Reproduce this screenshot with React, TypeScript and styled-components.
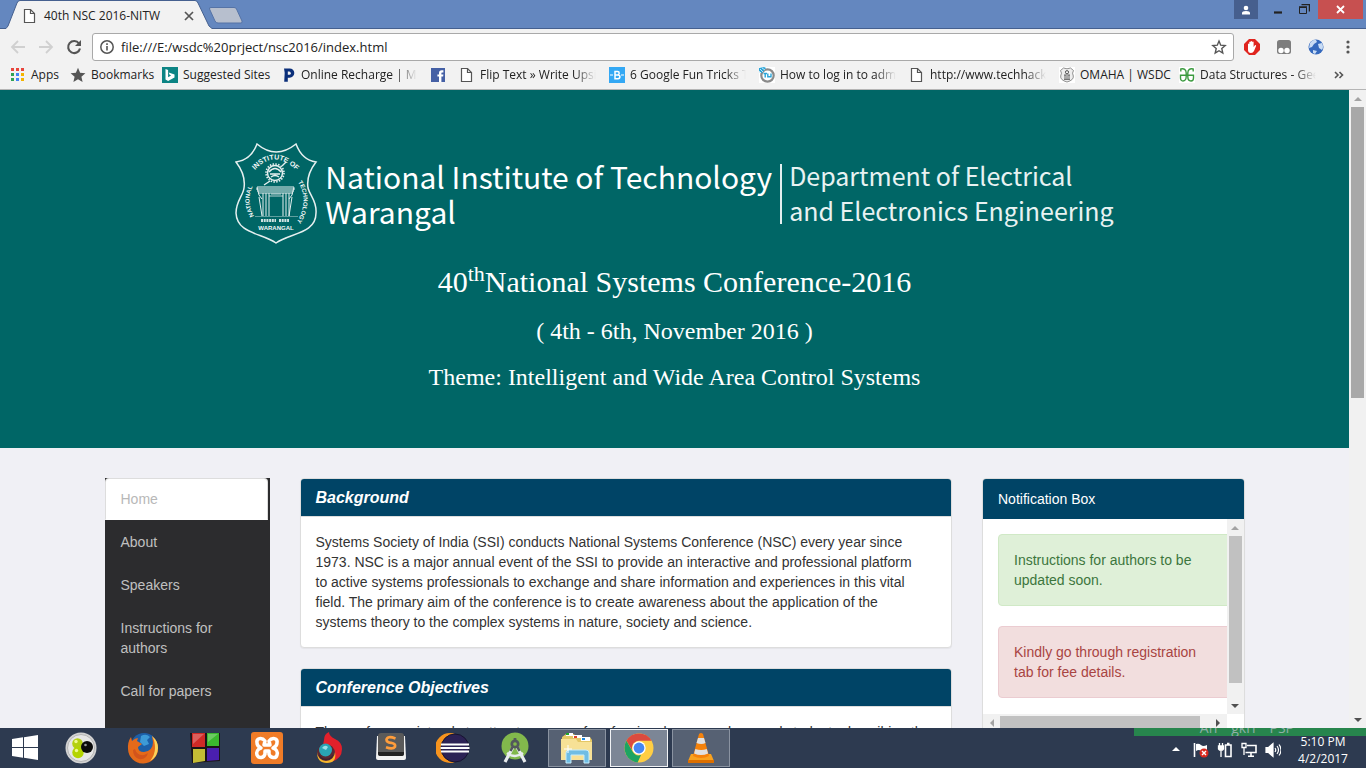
import React from "react";
import styled, { createGlobalStyle } from "styled-components";

const GlobalStyle = createGlobalStyle`
  *, *::before, *::after { box-sizing: border-box; }
  body { margin: 0; font-family: "Liberation Sans", Arial, sans-serif; font-size: 14px; line-height: 20px; color: #333; }
  button { border: 0; padding: 0; background: none; font: inherit; color: inherit; }
  h1, h2, h3, p, ul { margin: 0; padding: 0; }
  svg { display: block; flex: none; }
`;

const uiFont = `"Open Sans", "Segoe UI", sans-serif`;

const Desktop = styled.div`
  display: flex;
  flex-direction: column;
  height: 100vh;
  overflow: hidden;
`;

/* ---------- browser frame ---------- */

const TabStrip = styled.div`
  display: flex;
  justify-content: space-between;
  flex: none;
  height: 29px;
  background: #6487bf;
  border-bottom: 1px solid #45608f;
  font-family: ${uiFont};
`;

const TabGroup = styled.div`
  display: flex;
  padding-left: 6px;
`;

const Tab = styled.div`
  position: relative;
  display: flex;
  align-items: center;
  width: 206px;
  height: 29px;
  padding: 2px 14px 0 16px;
  font-size: 12px;
  line-height: 16px;
  color: #222;
`;

const TabShape = styled.svg`
  position: absolute;
  left: 0;
  top: 0;
`;

const TabIcon = styled.span`
  position: relative;
  width: 22px;
`;

const TabTitle = styled.span`
  position: relative;
  flex: 1;
  white-space: nowrap;
`;

const TabClose = styled.button`
  position: relative;
  width: 14px;
`;

const NewTab = styled.button`
  display: block;
  height: 24px;
  padding-top: 7px;
  margin-left: -4px;
`;

const WindowControls = styled.div`
  display: flex;
  height: 19px;
  padding-right: 3px;
`;

const WindowButton = styled.button<{ $width: number; $bg?: string }>`
  display: flex;
  align-items: center;
  justify-content: center;
  width: ${(p) => p.$width}px;
  background: ${(p) => p.$bg ?? "transparent"};
`;

const Toolbar = styled.div`
  display: flex;
  align-items: center;
  flex: none;
  height: 36px;
  padding: 0 8px 0 10px;
  background: #f2f2f2;
`;

const NavButton = styled.button`
  width: 28px;
`;

const AddressBar = styled.label`
  display: flex;
  align-items: center;
  flex: 1;
  gap: 6px;
  height: 28px;
  margin-right: 10px;
  padding: 0 6px;
  margin-left: -2px;
  background: #fff;
  border: 1px solid #a9a9a9;
  border-radius: 3px;
`;

const AddressInput = styled.input`
  flex: 1;
  min-width: 0;
  border: 0;
  padding: 0;
  outline: 0;
  background: transparent;
  font-family: ${uiFont};
  font-size: 13px;
  line-height: 20px;
  color: #222;
`;

const ExtensionButton = styled.button`
  display: flex;
  justify-content: center;
  width: 16px;
  margin-right: 16px;
  &:last-child { margin-right: 2px; }
`;

const BookmarkBar = styled.nav`
  display: flex;
  align-items: center;
  flex: none;
  gap: 13px;
  height: 25px;
  padding: 0 21px 4px 10px;
  background: #f2f2f2;
  border-bottom: 1px solid #b5b5b5;
  font-family: ${uiFont};
  font-size: 12px;
  line-height: 16px;
  overflow: hidden;
`;

const Bookmark = styled.a`
  display: flex;
  align-items: center;
  flex: none;
  gap: 5px;
  color: #222;
  text-decoration: none;
`;

const BookmarkLabel = styled.span<{ $width: number; $fade?: boolean }>`
  width: ${(p) => p.$width}px;
  white-space: nowrap;
  ${(p) =>
    p.$fade &&
    `overflow: hidden;
     -webkit-mask-image: linear-gradient(to right, #000 82%, transparent);
     mask-image: linear-gradient(to right, #000 82%, transparent);`}
`;

const MoreButton = styled.button`
  margin-left: auto;
`;

/* ---------- page ---------- */

const Viewport = styled.div`
  display: flex;
  flex: 1;
  min-height: 0;
  background: #f0f0f5;
`;

const Page = styled.main`
  flex: 1;
  min-width: 0;
  overflow: hidden;
`;

const Banner = styled.header`
  display: flex;
  flex-direction: column;
  align-items: center;
  height: 358px;
  padding-top: 53px;
  background: #006666;
  color: #fff;
  text-align: center;
`;

const Brand = styled.div`
  display: flex;
  align-items: center;
  height: 102px;
  font-family: "Noto Sans CJK SC", sans-serif;
  text-align: left;
  white-space: nowrap;
`;

const Institute = styled.div`
  margin-left: 7px;
  font-size: 30px;
  line-height: 35px;
`;

const Department = styled.div`
  display: flex;
  flex-direction: column;
  height: 60px;
  margin-left: 8px;
  padding-left: 7px;
  border-left: 2px solid #e4efef;
  color: #e8f2f2;
  font-size: 25px;
  line-height: 35px;
  span:first-child { margin-top: -6px; }
`;

const Conference = styled.h1`
  margin: 19px 0 -2px;
  font: 30px/36px "Liberation Serif", "Times New Roman", serif;
  sup { font-size: 22px; line-height: 0; }
`;

const ConferenceDetail = styled.h2`
  margin-top: 20px;
  font: 24px/26px "Liberation Serif", "Times New Roman", serif;
`;

const Columns = styled.div`
  display: grid;
  grid-template-columns: repeat(12, minmax(0, 1fr));
  align-items: start;
  column-gap: 30px;
  max-width: 1140px;
  margin: 30px auto 0;
`;

const SideNav = styled.nav`
  grid-column: span 2;
  display: flex;
  flex-direction: column;
  gap: 1px;
  min-height: 430px;
  padding-right: 2px;
  background: #2c2c2e;
`;

const SideLink = styled.a<{ $active?: boolean }>`
  padding: 10px 15px;
  border: 1px solid ${(p) => (p.$active ? "#ddd" : "transparent")};
  border-bottom: 1px solid transparent;
  border-radius: 4px 4px 0 0;
  background: ${(p) => (p.$active ? "#fff" : "transparent")};
  color: ${(p) => (p.$active ? "#b8b8b8" : "#c0c0c0")};
  text-decoration: none;
`;

const Articles = styled.div`
  grid-column: span 7;
`;

const Panel = styled.section`
  margin-bottom: 20px;
  border: 1px solid #ddd;
  border-radius: 4px;
  background: #fff;
  box-shadow: 0 1px 1px rgba(0, 0, 0, 0.05);
  overflow: hidden;
`;

const PanelTitle = styled.h3`
  padding: 10px 15px;
  border-bottom: 1px solid #ddd;
  background: #004466;
  color: #fff;
  font-size: 16px;
  font-style: italic;
  line-height: 17px;
`;

const PanelText = styled.p`
  padding: 15px;
`;

const Aside = styled.aside`
  grid-column: span 3;
`;

const NoticeTitle = styled.h3`
  padding: 10px 15px;
  background: #004466;
  color: #fff;
  font-size: 14px;
  font-weight: 400;
  line-height: 20px;
`;

const NoticeFrame = styled.div`
  display: grid;
  grid-template-columns: minmax(0, 1fr) 17px;
  grid-template-rows: 195px 17px;
`;

const NoticeList = styled.div`
  display: flex;
  flex-direction: column;
  gap: 20px;
  padding: 15px 0 0 15px;
  overflow: hidden;
`;

const Notice = styled.div<{ $tone: "success" | "danger" }>`
  width: 245px;
  padding: 15px 35px 15px 15px;
  border: 1px solid ${(p) => (p.$tone === "success" ? "#d0e9c6" : "#ebccd1")};
  border-radius: 4px;
  background: ${(p) => (p.$tone === "success" ? "#dff0d8" : "#f2dede")};
  color: ${(p) => (p.$tone === "success" ? "#3c763d" : "#a94442")};
`;

const ScrollTrack = styled.div<{ $horizontal?: boolean }>`
  display: flex;
  flex-direction: ${(p) => (p.$horizontal ? "row" : "column")};
  align-items: center;
  flex: none;
  min-width: 17px;
  background: #f1f1f1;
`;

const ScrollArrow = styled.span<{ $end?: boolean }>`
  display: flex;
  align-items: center;
  justify-content: center;
  width: 17px;
  height: 17px;
  ${(p) => p.$end && "margin-top: auto;"}
`;

const ScrollThumb = styled.span<{ $length: number; $horizontal?: boolean; $dark?: boolean }>`
  width: ${(p) => (p.$horizontal ? p.$length : 13)}px;
  height: ${(p) => (p.$horizontal ? 13 : p.$length)}px;
  margin-right: ${(p) => (p.$horizontal ? "auto" : 0)};
  background: ${(p) => (p.$dark ? "#a8a8a8" : "#c1c1c1")};
`;

/* ---------- taskbar ---------- */

const Taskbar = styled.footer`
  position: relative;
  display: flex;
  flex: none;
  height: 40px;
  background: #2d3a50;
  color: #fff;
  font-family: ${uiFont};
`;

const StartButton = styled.button`
  display: flex;
  align-items: center;
  justify-content: center;
  width: 50px;
  margin-right: 2px;
`;

const AppList = styled.div`
  display: flex;
  gap: 4px;
  padding: 1px 0;
`;

const AppButton = styled.button<{ $state?: "open" | "active" }>`
  display: flex;
  align-items: center;
  justify-content: center;
  width: 58px;
  border: 1px solid
    ${(p) => (p.$state === "active" ? "#f0f2f5" : p.$state === "open" ? "#8a93a1" : "transparent")};
  background: ${(p) => (p.$state === "active" ? "#7c8696" : p.$state === "open" ? "#566173" : "transparent")};
`;

const Tray = styled.div`
  display: flex;
  align-items: center;
  gap: 8px;
  margin-left: auto;
  padding: 4px 15px 0 0;
  svg:first-child { margin-right: 4px; }
`;

const Clock = styled.time`
  width: 56px;
  margin-left: 6px;
  font-size: 12px;
  line-height: 17px;
  text-align: center;
  white-space: nowrap;
`;

const GreenStrip = styled.div`
  position: absolute;
  top: 0;
  right: 0;
  display: flex;
  align-items: flex-end;
  justify-content: flex-end;
  gap: 14px;
  width: 232px;
  height: 8px;
  padding-right: 72px;
  background: #27854d;
  color: #8fb0a8;
  font-size: 14px;
  line-height: 16px;
  overflow: hidden;
`;

/* ---------- small drawings ---------- */

const DocIcon = () => (
  <svg width="16" height="16" viewBox="0 0 16 16">
    <path d="M2.500 1.500h6l4 4v9h-10z" fill="#fff" stroke="#555" strokeWidth="1.200" />
    <path d="M8.500 1.500v4h4" fill="none" stroke="#555" strokeWidth="1.200" />
  </svg>
);

const AppsIcon = () => (
  <svg width="16" height="16" viewBox="0 0 16 16">
    {["#e8453c", "#e8453c", "#e8453c", "#30a352", "#4285f4", "#f4b400", "#30a352", "#4285f4", "#f4b400"].map((c, i) => (
      <rect key={i} x={1 + (i % 3) * 5} y={1 + Math.floor(i / 3) * 5} width="3" height="3" fill={c} />
    ))}
  </svg>
);

const StarIcon = ({ filled }: { filled?: boolean }) => (
  <svg width="16" height="16" viewBox="0 0 16 16">
    <path
      d={
        filled
          ? "M8 .8l2.100 4.900 5.300.5-4 3.500 1.200 5.200L8 12.200l-4.600 2.700 1.200-5.200-4-3.500 5.300-.5z"
          : "M8 2l1.700 4.200 4.500.4-3.400 3 1 4.400L8 11.700 4.200 14l1-4.400-3.400-3 4.500-.4z"
      }
      fill={filled ? "#555" : "none"}
      stroke="#555"
      strokeWidth={filled ? 0 : 1.4}
    />
  </svg>
);

const BingIcon = () => (
  <svg width="16" height="16" viewBox="0 0 16 16">
    <rect width="16" height="16" fill="#0c8484" />
    <path d="M3.500 2l2.600 1v7.200l3-1.700-1.500-.8-.9-2.200 5.800 2v2.900L6.100 14l-2.600-1.500z" fill="#fff" />
  </svg>
);

const PaytmIcon = () => (
  <svg width="16" height="16" viewBox="0 0 16 16">
    <path d="M4 1.500h5.700a4.600 4.600 0 010 9.200H7.800v4H4.200l.5-9z" fill="#0b2f7a" />
    <path d="M7.800 4.600h1.400a1.600 1.600 0 010 3.200H7.800z" fill="#f2f2f2" />
  </svg>
);

const FacebookIcon = () => (
  <svg width="16" height="16" viewBox="0 0 16 16">
    <rect x="1" y="1" width="14" height="14" fill="#4560a5" />
    <path d="M9 15V9.600H7.400V7.400H9V6c0-1.900 1-2.800 2.700-2.800h1.700v2.200h-1.100c-.7 0-.9.3-.9.900v1.100h2l-.3 2.200h-1.700V15z" fill="#fff" />
  </svg>
);

const BloggerIcon = () => (
  <svg width="16" height="16" viewBox="0 0 16 16">
    <rect width="16" height="16" fill="#33a8f4" />
    <path d="M1 8h3M12 8h3" stroke="#fff" strokeWidth="1" />
    <path d="M6 4.500h2.500a1.700 1.700 0 010 3.400H6zm0 3.400h3a1.900 1.900 0 010 3.800H6z" fill="none" stroke="#fff" strokeWidth="1.500" />
  </svg>
);

const TwistIcon = () => (
  <svg width="16" height="16" viewBox="0 0 16 16">
    <rect width="16" height="16" fill="#fff" />
    <circle cx="8.500" cy="8.500" r="6.200" fill="#fff" stroke="#8a8a8a" strokeWidth="2.200" />
    <path d="M0 1l5-1 2 1-4 5-3-1z" fill="#2aa4d8" />
    <path d="M1 2l3 3M3 1l3 2M0 4l2 2" stroke="#fff" strokeWidth=".7" />
    <path d="M4.500 6.500h3.500M6.200 6.500v4M8.800 6.500v3.200h3.200V6.500" stroke="#2aa4d8" strokeWidth="1.400" fill="none" />
  </svg>
);

const SealIcon = () => (
  <svg width="16" height="16" viewBox="0 0 16 16">
    <rect width="16" height="16" fill="#fff" />
    <path d="M4.500 1Q8 2.600 11.500 1L14.500 3.500Q12.700 6 14.300 9Q15 13 8 15Q1 13 1.700 9Q3.300 6 1.500 3.500z" fill="#eee" stroke="#777" strokeWidth=".8" />
    <circle cx="8" cy="5.200" r="1.600" fill="none" stroke="#555" />
    <path d="M5 8h6M6 8v4M10 8v4M5 12.400h6M8 9v3" stroke="#555" strokeWidth=".9" />
  </svg>
);

const GeeksIcon = () => (
  <svg width="16" height="16" viewBox="0 0 16 16">
    <rect width="16" height="16" fill="#fff" />
    <path
      d="M1.800 4.500V2C5 1 7.200 2.500 7.200 6v3.500c0 3-1.500 4.500-3.200 4.500s-2.500-1.300-2.500-3V8.300h13V11c0 1.700-.8 3-2.500 3S8.800 12.500 8.800 9.500V6c0-3.500 2.200-5 5.400-4v2.500"
      fill="none"
      stroke="#3b9a3f"
      strokeWidth="1.400"
    />
  </svg>
);

const Arrow = ({ dir, dim }: { dir: "up" | "down" | "left" | "right"; dim?: boolean }) => {
  const shapes = { up: "M0 6l4-4 4 4z", down: "M0 2h8L4 6z", left: "M6 0v8L2 4z", right: "M2 0l4 4-4 4z" };
  return (
    <svg width="8" height="8" viewBox="0 0 8 8">
      <path d={shapes[dir]} fill={dim ? "#a3a3a3" : "#505050"} />
    </svg>
  );
};

const Emblem = () => (
  <svg width="83" height="102" viewBox="0 0 83 102" fill="none" stroke="#e6f0f0">
    <path
      d="M22 1Q41 17 61 1Q67 17 81 19Q71 32 73 45C75 53 82 58 81 70C81 91 55 90 41 100C27 90 2 91 1 70C1 58 8 53 9 45Q11 32 1 19Q16 17 22 1Z"
      strokeWidth="1.500"
    />
    <circle cx="40" cy="30" r="7.500" strokeWidth="1.500" />
    <circle cx="40" cy="30" r="9" strokeWidth="1.600" strokeDasharray="1.500 1.330" />
    <path d="M34 29q6-7 12 0M35 31h10M36 34q4-3 8 0M29 42l6-4M47 23l4-4" strokeWidth="1.400" />
    <path d="M22 44h37M21 46h39M22 48h37M23 50h35" strokeWidth="1.100" />
    <path d="M22 44l2 8 3 4M59 44l-2 8-3 4M28 50v23M31 50v23M34 50v23M48 50v23M51 50v23M54 50v23M24 54l3 19M57 54l-3 19" strokeWidth="1" />
    <path d="M34 53h14M36 51h10" strokeWidth=".8" />
    <path d="M20 73.500h43" strokeWidth=".7" opacity=".6" />
    <path d="M26 77.500h15M44 77.500h10" strokeWidth="2.800" strokeDasharray="2 .7" opacity=".9" />
    <path id="arcTop" d="M20 27Q40 5 63 29" stroke="none" />
    <path id="arcLeft" d="M19 73Q10 57 19 41" stroke="none" />
    <path id="arcRight" d="M63 39Q75 58 61 80" stroke="none" />
    <g fill="#f2f8f8" stroke="none" fontFamily="Liberation Sans, sans-serif" fontWeight="700" fontSize="6">
      <text fontSize="7"><textPath href="#arcTop">INSTITUTE OF</textPath></text>
      <text><textPath href="#arcLeft">NATIONAL</textPath></text>
      <text><textPath href="#arcRight">TECHNOLOGY</textPath></text>
      <text x="41" y="87" textAnchor="middle">WARANGAL</text>
    </g>
  </svg>
);

/* ---------- taskbar drawings ---------- */

const WindowsLogo = () => (
  <svg width="28" height="28" viewBox="0 0 28 28" fill="#fff">
    <path d="M1 5l11-1.700V13H1zM13 3.200L27 1v12H13zM1 14h11v9.700L1 22zM13 14h14v12L13 23.800z" />
  </svg>
);

const BallsIcon = () => (
  <svg width="32" height="32" viewBox="0 0 32 32">
    <circle cx="16" cy="16" r="15.500" fill="#d2d2d2" />
    <circle cx="16" cy="16" r="13.500" fill="#e6e6e6" stroke="#b5b5b5" />
    <circle cx="12.500" cy="11.500" r="5.300" fill="#b4d010" />
    <circle cx="13" cy="20.500" r="5.700" fill="#b4d400" />
    <circle cx="22" cy="15" r="6" fill="#0b0b0b" />
    <circle cx="11" cy="9.500" r="1.700" fill="#effa90" />
    <circle cx="11.500" cy="18.500" r="1.700" fill="#effa90" />
    <circle cx="20.500" cy="13" r="1.300" fill="#999" />
  </svg>
);

const FirefoxIcon = () => (
  <svg width="32" height="32" viewBox="0 0 32 32">
    <circle cx="17" cy="14.500" r="13.500" fill="#1c5fa8" />
    <path d="M14 4q5-3 9 1l-3 3 2 4-5 2-4-4z" fill="#3d9ad6" />
    <path d="M25 4q6 5 6 12a15 15 0 01-30 1q-.5-7 3-12l1 4q3-3 6-3l-1 3 5 3-4 3q0 5 6 5 9-1 9-10z" fill="#e46a1a" />
    <path d="M25 4q6 5 6 12a15 15 0 01-8 13q5-6 5-13 0-7-3-12z" fill="#fbd35a" />
    <path d="M8 17q2 7 9 6l4-2q-2 7-9 6-6-2-6-9z" fill="#d2541c" />
  </svg>
);

const CubesIcon = () => (
  <svg width="32" height="32" viewBox="0 0 32 32">
    <path d="M1 1h30v28L3 31z" fill="#1a1418" />
    <path d="M3 1h13v14H3z" fill="#cf2a26" />
    <path d="M18 1h12v13H18z" fill="#3bb82e" />
    <path d="M4 17h12v12l-12 2z" fill="#c4bc35" />
    <path d="M18 16h12v12l-12 1z" fill="#4a1fae" />
    <path d="M4 2h11L4 12zM19 2h10l-10 8z" fill="#fff" opacity=".25" />
  </svg>
);

const XamppIcon = () => (
  <svg width="32" height="32" viewBox="0 0 32 32">
    <rect width="32" height="32" rx="3" fill="#f07c28" />
    <path
      d="M14 9C11 5 5 6 6 11c0 3 2 4 4 5-3 1-5 4-4 7 2 4 7 3 8-1v-3h4v3c1 4 7 5 8 1 1-3-1-6-4-7 2-1 4-2 4-5 1-5-5-6-8-2l1 4h-6z"
      fill="none"
      stroke="#fff"
      strokeWidth="3.500"
      strokeLinejoin="round"
    />
  </svg>
);

const TorchIcon = () => (
  <svg width="32" height="32" viewBox="0 0 32 32">
    <path d="M16 0q-5 2-5 8l-1 5q11-2 11 9l-3 8q11-3 11-13 0-7-7-10-6-3-6-7z" fill="#e3202b" />
    <circle cx="13" cy="21" r="9" fill="#5a2a34" />
    <path d="M4 20a9 9 0 0018 0q2 11-8 11-10 0-10-11z" fill="#f6b62b" />
    <path d="M6 22a7.500 7.500 0 0014 0q0 6-7 6t-7-6z" fill="#3b2230" />
    <circle cx="12.500" cy="18" r="6.500" fill="#2aa4b4" />
    <path d="M9 16q3-4 6-1l-2 3z" fill="#9be0e6" />
  </svg>
);

const SublimeIcon = () => (
  <svg width="32" height="32" viewBox="0 0 32 32">
    <path d="M2 4L1 26q0 2 2 2h26q2 0 2-2L30 4z" fill="#f2f2f2" />
    <path d="M3 4q0-3 3-3h20q3 0 3 3v17q0 3-3 3H6q-3 0-3-3z" fill="#5a5a5a" />
    <path d="M3 20h26v2q0 2-2 2H5q-2 0-2-2z" fill="#222" />
    <path d="M20.500 6.500q-8-3-9 1 0 3 4.500 3.300 5 1 4 4-2 3-9 .5" fill="none" stroke="#ff9d3b" strokeWidth="2.700" />
  </svg>
);

const EclipseIcon = () => (
  <svg width="34" height="32" viewBox="0 0 34 32">
    <path d="M14 1a15 15 0 000 30q3 0 5-1a15 15 0 010-28q-2-1-5-1z" fill="#f7941e" />
    <circle cx="19" cy="16" r="14" fill="#2c2255" stroke="#17142f" />
    <path d="M5 12.500h28M4.500 16h29M5 19.500h28" stroke="#fff" strokeWidth="1.800" />
  </svg>
);

const AndroidStudioIcon = () => (
  <svg width="32" height="32" viewBox="0 0 32 32">
    <circle cx="16" cy="14" r="13.500" fill="#82b84c" />
    <path d="M14 15L6 30M18 15l8 15" stroke="#e8ecee" strokeWidth="3.200" />
    <path d="M8 21q8 6 16 0" fill="none" stroke="#e8ecee" strokeWidth="2.500" />
    <circle cx="16" cy="12" r="3.200" fill="none" stroke="#53585c" strokeWidth="2.700" />
    <path d="M16 6v3M13.500 15l-2 4M18.500 15l2 4" stroke="#53585c" strokeWidth="2.700" />
  </svg>
);

const ExplorerIcon = () => (
  <svg width="34" height="32" viewBox="0 0 34 32">
    <path d="M2 5l4-3h8l2 3h14l2 3v20H2z" fill="#e4c765" />
    <path d="M6 1h7v3H6z" fill="#fff" /><path d="M6 1h3v2H6z" fill="#20a52c" />
    <path d="M13 3h9v3h-9z" fill="#fff" /><path d="M14 4h3v2h-3z" fill="#e0442c" />
    <path d="M21 5h9v4h-9z" fill="#fff" /><path d="M22 6h3v2h-3z" fill="#2088e0" />
    <path d="M1 7h15l2 3h14v18H1z" fill="#f7e196" />
    <path d="M6 31V21q0-3 3-3h17q3 0 3 3v10h-5v-8H11v8z" fill="#6fbde4" stroke="#c6ecfa" />
    <path d="M8 13v8M4 17h8" stroke="#fff" />
  </svg>
);

const ChromeIcon = () => (
  <svg width="30" height="30" viewBox="0 0 30 30">
    <circle cx="15" cy="15" r="14.500" fill="#ffce44" />
    <path d="M2.400 7.800A14.500 14.500 0 0127.600 7.800H15a7.200 7.200 0 00-6.500 10z" fill="#db4b3f" />
    <path d="M2.400 7.800l6.300 11A7.200 7.200 0 0017 22l-3.400 7.400A14.500 14.500 0 012.400 7.800z" fill="#1da462" />
    <circle cx="15" cy="15" r="6.700" fill="#fff" />
    <circle cx="15" cy="15" r="5.400" fill="#4587f3" />
  </svg>
);

const VlcIcon = () => (
  <svg width="28" height="32" viewBox="0 0 28 32">
    <path d="M4 22h20l3 7H1z" fill="#f9a21e" />
    <path d="M12 2q2-2 4 0l6 22q-8 4-16 0z" fill="#f5820b" />
    <path d="M11 6h6l1.500 5q-4 2-9 0zM8.300 17q6 2 11.500 0l1.300 4.500q-7 3-14 0z" fill="#e0e0e0" />
    <path d="M1 28h26v3H1z" fill="#dc6f00" />
  </svg>
);

const apps: { name: string; icon: React.ReactNode; state?: "open" | "active" }[] = [
  { name: "Media balls", icon: <BallsIcon /> },
  { name: "Firefox", icon: <FirefoxIcon /> },
  { name: "Code Blocks", icon: <CubesIcon /> },
  { name: "XAMPP", icon: <XamppIcon /> },
  { name: "Torch", icon: <TorchIcon /> },
  { name: "Sublime Text", icon: <SublimeIcon /> },
  { name: "Eclipse", icon: <EclipseIcon /> },
  { name: "Android Studio", icon: <AndroidStudioIcon /> },
  { name: "File Explorer", icon: <ExplorerIcon />, state: "open" },
  { name: "Chrome", icon: <ChromeIcon />, state: "active" },
  { name: "VLC", icon: <VlcIcon />, state: "open" },
];

const bookmarks: { label?: string; width?: number; fade?: boolean; icon: React.ReactNode }[] = [
  { label: "Apps", width: 26, icon: <AppsIcon /> },
  { label: "Bookmarks", width: 58, icon: <StarIcon filled /> },
  { label: "Suggested Sites", width: 84, icon: <BingIcon /> },
  { label: "Online Recharge | Mobile", width: 116, fade: true, icon: <PaytmIcon /> },
  { icon: <FacebookIcon /> },
  { label: "Flip Text » Write Upside Down", width: 116, fade: true, icon: <DocIcon /> },
  { label: "6 Google Fun Tricks That", width: 116, fade: true, icon: <BloggerIcon /> },
  { label: "How to log in to admin", width: 116, fade: true, icon: <TwistIcon /> },
  { label: "http://www.techhacks.com", width: 116, fade: true, icon: <DocIcon /> },
  { label: "OMAHA | WSDC", width: 86, icon: <SealIcon /> },
  { label: "Data Structures - GeeksforGeeks", width: 116, fade: true, icon: <GeeksIcon /> },
];

const links = ["Home", "About", "Speakers", "Instructions for authors", "Call for papers"];

const BrowserFrame = () => (
  <>
    <TabStrip>
      <TabGroup>
        <Tab>
          <TabShape width="206" height="29" viewBox="0 0 206 29">
            <path d="M0 28.500L2 26L11 3Q12 .500 14 .500H189Q191 .500 192 3L203 26L206 28.500V29H0z" fill="#f2f2f2" />
            <path d="M0 28.500L2 26L11 3Q12 .500 14 .500H189Q191 .500 192 3L203 26L206 28.500" fill="none" stroke="#45608f" />
          </TabShape>
          <TabIcon><DocIcon /></TabIcon>
          <TabTitle>40th NSC 2016-NITW</TabTitle>
          <TabClose aria-label="Close tab">
            <svg width="10" height="10" viewBox="0 0 10 10"><path d="M1 1l8 8M9 1L1 9" stroke="#555" strokeWidth="1.700" /></svg>
          </TabClose>
        </Tab>
        <NewTab aria-label="New tab">
          <svg width="36" height="17" viewBox="0 0 36 17">
            <path d="M1.500 2Q1 .5 3 .5H26Q28 .5 28.500 2L34 14Q34.500 16 33 16H10Q8 16 7 14z" fill="#b7bfce" stroke="#5573a6" />
          </svg>
        </NewTab>
      </TabGroup>
      <WindowControls>
        <WindowButton $width={24} $bg="#465f8e" aria-label="Profile">
          <svg width="10" height="10" viewBox="0 0 10 10" fill="#fff"><circle cx="5" cy="3" r="2.300" /><path d="M1 9.500V8q0-2 4-2t4 2v1.500z" /></svg>
        </WindowButton>
        <WindowButton $width={40} aria-label="Minimize">
          <svg width="10" height="10" viewBox="0 0 10 10"><path d="M1 7.500h8" stroke="#222" strokeWidth="2.200" /></svg>
        </WindowButton>
        <WindowButton $width={12} aria-label="Restore">
          <svg width="11" height="11" viewBox="0 0 11 11" fill="none" stroke="#222"><path d="M.5 3.500h7v6h-7z" /><path d="M0 3h8M2.500 .500h8v7" strokeWidth="1.500" /></svg>
        </WindowButton>
        <WindowButton as="span" $width={8} />
        <WindowButton $width={45} $bg="#c75050" aria-label="Close window">
          <svg width="9" height="9" viewBox="0 0 9 9"><path d="M1 1l7 7M8 1L1 8" stroke="#fff" strokeWidth="1.800" /></svg>
        </WindowButton>
      </WindowControls>
    </TabStrip>
    <Toolbar>
      <NavButton aria-label="Back">
        <svg width="16" height="16" viewBox="0 0 16 16" fill="none" stroke="#d0d0d0" strokeWidth="1.800"><path d="M15 8H2M8 2L2 8l6 6" /></svg>
      </NavButton>
      <NavButton aria-label="Forward">
        <svg width="16" height="16" viewBox="0 0 16 16" fill="none" stroke="#d0d0d0" strokeWidth="1.800"><path d="M1 8h13M8 2l6 6-6 6" /></svg>
      </NavButton>
      <NavButton aria-label="Reload">
        <svg width="16" height="16" viewBox="0 0 16 16"><path d="M13 4.500A6 6 0 1014 9.500" fill="none" stroke="#555" strokeWidth="2.100" /><path d="M15 1v6H9z" fill="#555" /></svg>
      </NavButton>
      <AddressBar>
        <svg width="16" height="16" viewBox="0 0 16 16"><circle cx="8" cy="8" r="6.200" fill="none" stroke="#555" strokeWidth="1.500" /><path d="M8 7v4.500M8 4.300v1.700" stroke="#555" strokeWidth="1.600" /></svg>
        <AddressInput aria-label="Address" defaultValue="file:///E:/wsdc%20prject/nsc2016/index.html" />
        <StarIcon />
      </AddressBar>
      <ExtensionButton aria-label="Ad blocker">
        <svg width="16" height="16" viewBox="0 0 16 16">
          <path d="M5 0h6l5 5v6l-5 5H5l-5-5V5z" fill="#e0251f" />
          <path d="M4 8V5q1-1 1.300 0V3q1-1 1.400 0v-.6q1-1 1.500 0V3q1-1 1.400 0v5l1.500-2q1.300 0 1 1L10 12q-1 2-3 2-3 0-3-3z" fill="#fff" />
        </svg>
      </ExtensionButton>
      <ExtensionButton aria-label="Script manager">
        <svg width="16" height="16" viewBox="0 0 16 16"><rect x="1" y="1" width="14" height="14" rx="2.500" fill="#7d7d7d" /><circle cx="5" cy="11.500" r="2.700" fill="#fff" /><circle cx="11" cy="11.500" r="2.700" fill="#fff" /></svg>
      </ExtensionButton>
      <ExtensionButton aria-label="Globe">
        <svg width="16" height="16" viewBox="0 0 16 16"><circle cx="8" cy="8" r="7.500" fill="#3569bd" /><path d="M2 4q3-4 6-3l1 2-3 2-2 3-3 1zM10 5l4-1q2 4 0 7l-3-2zM5 11l4 1-2 3-2-1z" fill="#c9dcf4" /></svg>
      </ExtensionButton>
      <ExtensionButton aria-label="Menu">
        <svg width="4" height="14" viewBox="0 0 4 14" fill="#555"><circle cx="2" cy="2" r="1.600" /><circle cx="2" cy="7" r="1.600" /><circle cx="2" cy="12" r="1.600" /></svg>
      </ExtensionButton>
    </Toolbar>
    <BookmarkBar aria-label="Bookmarks">
      {bookmarks.map((b, i) => (
        <Bookmark key={i} href="#" aria-label={b.label ?? "Facebook"}>
          {b.icon}
          {b.label && <BookmarkLabel $width={b.width ?? 116} $fade={b.fade}>{b.label}</BookmarkLabel>}
        </Bookmark>
      ))}
      <MoreButton aria-label="More bookmarks">
        <svg width="12" height="10" viewBox="0 0 12 10" fill="none" stroke="#555" strokeWidth="1.600"><path d="M2 2l3 3-3 3M6.500 2l3 3-3 3" /></svg>
      </MoreButton>
    </BookmarkBar>
  </>
);

const NotificationBox = () => (
  <Panel>
    <NoticeTitle>Notification Box</NoticeTitle>
    <NoticeFrame>
      <NoticeList>
        <Notice $tone="success">Instructions for authors to be updated soon.</Notice>
        <Notice $tone="danger">Kindly go through registration tab for fee details.</Notice>
      </NoticeList>
      <ScrollTrack>
        <ScrollArrow><Arrow dir="up" dim /></ScrollArrow>
        <ScrollThumb $length={147} />
        <ScrollArrow $end><Arrow dir="down" /></ScrollArrow>
      </ScrollTrack>
      <ScrollTrack $horizontal>
        <ScrollArrow><Arrow dir="left" dim /></ScrollArrow>
        <ScrollThumb $length={200} $horizontal />
        <ScrollArrow><Arrow dir="right" /></ScrollArrow>
      </ScrollTrack>
    </NoticeFrame>
  </Panel>
);

const SystemTray = () => (
  <Tray>
    <svg width="10" height="16" viewBox="0 0 10 16"><path d="M1 9l4-4 4 4z" fill="#fff" /></svg>
    <svg width="16" height="16" viewBox="0 0 16 16">
      <path d="M1.500 1v14" stroke="#fff" strokeWidth="1.600" /><path d="M3 2q3-1 5 1t6 0v7q-4 1-6-1t-5 0z" fill="#fff" />
      <circle cx="11" cy="11" r="4.500" fill="#d9281e" /><path d="M9 9l4 4M13 9l-4 4" stroke="#fff" strokeWidth="1.400" />
    </svg>
    <svg width="16" height="16" viewBox="0 0 16 16" fill="none" stroke="#fff" strokeWidth="1.300">
      <path d="M8.500 3h5.500v11.500H8.500zM10 1.500h2.500" strokeWidth="1.600" /><path d="M2.500 1v3M5.500 1v3M4 8v7" /><path d="M1.500 4h5v3l-1 1h-3l-1-1z" fill="#fff" />
    </svg>
    <svg width="16" height="16" viewBox="0 0 16 16" fill="none" stroke="#fff" strokeWidth="1.300">
      <path d="M6 3.500h9v7H4.500M10 10.500V14M7 14.300h6" strokeWidth="1.600" /><path d="M1 1.500h4v4H1zM3 5.500V13" />
    </svg>
    <svg width="16" height="16" viewBox="0 0 16 16" fill="none" stroke="#fff" strokeWidth="1.200">
      <path d="M1 5.500h2.500L8 1.500v13l-4.500-4H1z" fill="#fff" /><path d="M10 6q1.500 2 0 4M12 4q3 4 0 8M14 2.500q4 5.500 0 11" />
    </svg>
    <Clock>5:10 PM<br />4/2/2017</Clock>
  </Tray>
);

export default function App() {
  return (
    <Desktop>
      <GlobalStyle />
      <BrowserFrame />
      <Viewport>
        <Page>
          <Banner>
            <Brand>
              <Emblem />
              <Institute>National Institute of Technology<br />Warangal</Institute>
              <Department>
                <span>Department of Electrical</span>
                <span>and Electronics Engineering</span>
              </Department>
            </Brand>
            <Conference>40<sup>th</sup>National Systems Conference-2016</Conference>
            <ConferenceDetail>( 4th - 6th, November 2016 )</ConferenceDetail>
            <ConferenceDetail>Theme: Intelligent and Wide Area Control Systems</ConferenceDetail>
          </Banner>
          <Columns>
            <SideNav>
              {links.map((label, i) => (
                <SideLink key={label} href="#" $active={i === 0}>{label}</SideLink>
              ))}
            </SideNav>
            <Articles>
              <Panel>
                <PanelTitle>Background</PanelTitle>
                <PanelText>
                  Systems Society of India (SSI) conducts National Systems Conference (NSC) every year since
                  <br />1973. NSC is a major annual event of the SSI to provide an interactive and professional platform
                  <br />to active systems professionals to exchange and share information and experiences in this vital
                  <br />field. The primary aim of the conference is to create awareness about the application of the
                  <br />systems theory to the complex systems in nature, society and science.
                </PanelText>
              </Panel>
              <Panel>
                <PanelTitle>Conference Objectives</PanelTitle>
                <PanelText>
                  The conference intends to attract a group of professionals, researchers and students describing the
                  recent advances in systems.
                </PanelText>
              </Panel>
            </Articles>
            <Aside><NotificationBox /></Aside>
          </Columns>
        </Page>
        <ScrollTrack>
          <ScrollArrow><Arrow dir="up" dim /></ScrollArrow>
          <ScrollThumb $length={291} $dark />
          <ScrollArrow $end><Arrow dir="down" /></ScrollArrow>
        </ScrollTrack>
      </Viewport>
      <Taskbar>
        <StartButton aria-label="Start"><WindowsLogo /></StartButton>
        <AppList>
          {apps.map((app) => (
            <AppButton key={app.name} $state={app.state} aria-label={app.name}>{app.icon}</AppButton>
          ))}
        </AppList>
        <SystemTray />
        <GreenStrip><span>An</span><span>gkri</span><span>PSP</span></GreenStrip>
      </Taskbar>
    </Desktop>
  );
}
